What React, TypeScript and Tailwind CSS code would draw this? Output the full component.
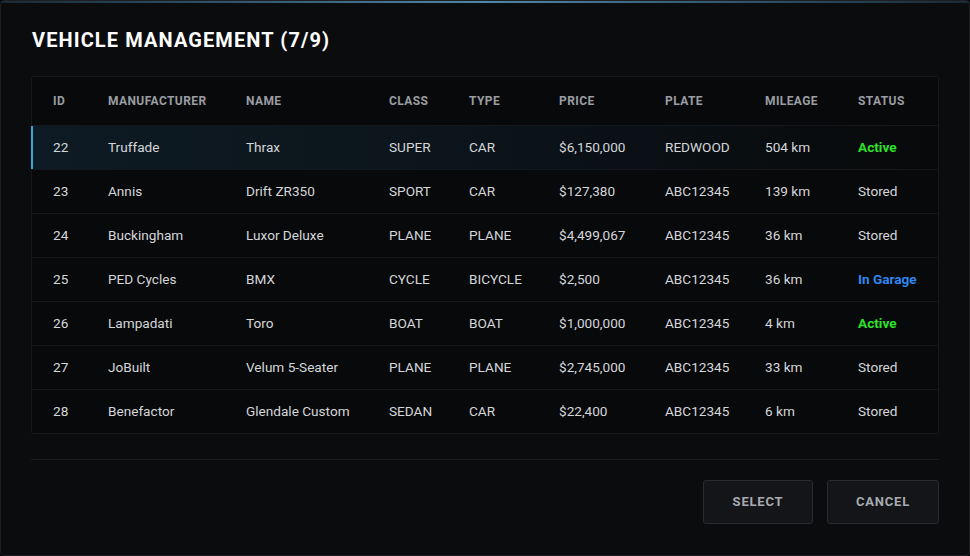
import React from "react";

const rows = [
  { id: 22, m: "Truffade", n: "Thrax", c: "SUPER", t: "CAR", p: "$6,150,000", pl: "REDWOOD", mi: "504 km", s: "Active" },
  { id: 23, m: "Annis", n: "Drift ZR350", c: "SPORT", t: "CAR", p: "$127,380", pl: "ABC12345", mi: "139 km", s: "Stored" },
  { id: 24, m: "Buckingham", n: "Luxor Deluxe", c: "PLANE", t: "PLANE", p: "$4,499,067", pl: "ABC12345", mi: "36 km", s: "Stored" },
  { id: 25, m: "PED Cycles", n: "BMX", c: "CYCLE", t: "BICYCLE", p: "$2,500", pl: "ABC12345", mi: "36 km", s: "In Garage" },
  { id: 26, m: "Lampadati", n: "Toro", c: "BOAT", t: "BOAT", p: "$1,000,000", pl: "ABC12345", mi: "4 km", s: "Active" },
  { id: 27, m: "JoBuilt", n: "Velum 5-Seater", c: "PLANE", t: "PLANE", p: "$2,745,000", pl: "ABC12345", mi: "33 km", s: "Stored" },
  { id: 28, m: "Benefactor", n: "Glendale Custom", c: "SEDAN", t: "CAR", p: "$22,400", pl: "ABC12345", mi: "6 km", s: "Stored" },
];

const grid = "grid grid-cols-[55px_138px_143px_80px_90px_106px_100px_93px_1fr] items-center pl-[21px]";

function statusClass(s: string) {
  if (s === "Active") return "text-[#2de12a] font-bold";
  if (s === "In Garage") return "text-[#2f86f0] font-bold";
  return "text-[#d4d6da]";
}

export default function App() {
  return (
    <div className="w-[970px] h-[556px] bg-[#050506] font-['Roboto',sans-serif]">
      <div className="relative w-full h-full bg-[#0b0c0e] border border-[#1d1f23] rounded-[4px] flex flex-col px-[30px] pt-[25px]">
        <div className="absolute top-0 left-0 right-0 h-[2px] bg-gradient-to-r from-[#1a2a36] via-[#4e88aa] to-[#1a2a36]" />
        <h1 className="pl-px text-[20px] leading-[28px] font-bold text-white tracking-[1.1px]">VEHICLE MANAGEMENT (7/9)</h1>
        <div className="mt-[22px] border border-[#17181c] bg-[#08090a] rounded-[2px]">
          <div className={`${grid} h-[48px] text-[12px] font-bold text-[#9a9da3] tracking-[0.4px]`}>
            <div>ID</div>
            <div>MANUFACTURER</div>
            <div>NAME</div>
            <div>CLASS</div>
            <div>TYPE</div>
            <div>PRICE</div>
            <div>PLATE</div>
            <div>MILEAGE</div>
            <div>STATUS</div>
          </div>
          {rows.map((r, i) => (
            <div
              key={r.id}
              className={`${grid} relative h-[44px] border-t border-[#16171a] text-[13.6px] text-[#d4d6da] ${
                i === 0 ? "bg-gradient-to-r from-[#0e1b24] via-[#0b141a] to-[#08090a]" : ""
              }`}
            >
              {i === 0 && <div className="absolute left-[-1px] top-0 bottom-0 w-[2px] bg-[#3aa6d8]" />}
              <div>{r.id}</div>
              <div>{r.m}</div>
              <div>{r.n}</div>
              <div>{r.c}</div>
              <div>{r.t}</div>
              <div>{r.p}</div>
              <div>{r.pl}</div>
              <div>{r.mi}</div>
              <div className={statusClass(r.s)}>{r.s}</div>
            </div>
          ))}
        </div>
        <div className="mt-[25px] h-px bg-[#1b1c20]" />
        <div className="mt-[20px] flex justify-end gap-[14px]">
          <button className="w-[110px] h-[44px] bg-[#141518] border border-[#2a2b2f] rounded-[3px] text-[13px] font-bold tracking-[0.8px] text-[#a7aab0]">
            SELECT
          </button>
          <button className="w-[112px] h-[44px] bg-[#141518] border border-[#2a2b2f] rounded-[3px] text-[13px] font-bold tracking-[0.8px] text-[#a7aab0]">
            CANCEL
          </button>
        </div>
      </div>
    </div>
  );
}
